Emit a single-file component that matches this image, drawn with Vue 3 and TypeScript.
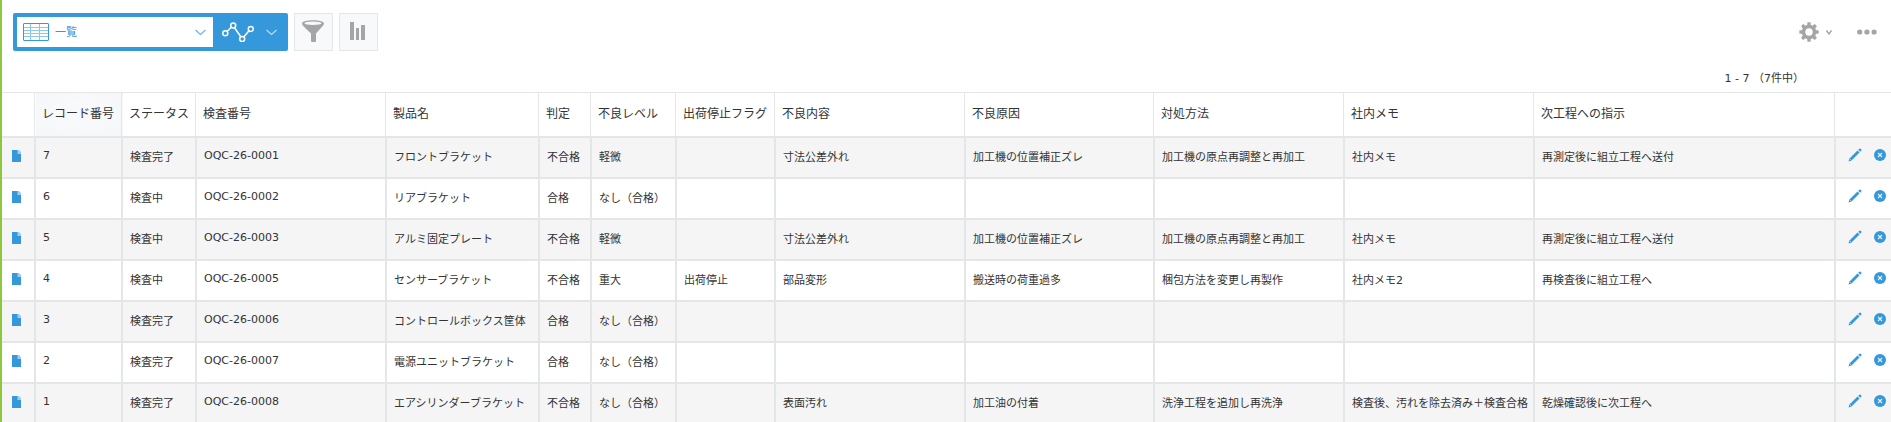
<script setup lang="ts">
import { ref } from 'vue'

interface Column {
  label: string
  cls: string
}

interface Inspection {
  id: number
  cells: string[]
}

const view = ref('一覧')

const columns: Column[] = [
  { label: 'レコード番号', cls: 'w-record' },
  { label: 'ステータス', cls: 'w-status' },
  { label: '検査番号', cls: 'w-text' },
  { label: '製品名', cls: 'w-product' },
  { label: '判定', cls: 'w-result' },
  { label: '不良レベル', cls: 'w-level' },
  { label: '出荷停止フラグ', cls: 'w-flag' },
  { label: '不良内容', cls: 'w-text' },
  { label: '不良原因', cls: 'w-cause' },
  { label: '対処方法', cls: 'w-text' },
  { label: '社内メモ', cls: 'w-text' },
  { label: '次工程への指示', cls: 'w-rest' },
]

const rows: Inspection[] = [
  { id: 7, cells: ['検査完了', 'OQC-26-0001', 'フロントブラケット', '不合格', '軽微', '', '寸法公差外れ', '加工機の位置補正ズレ', '加工機の原点再調整と再加工', '社内メモ', '再測定後に組立工程へ送付'] },
  { id: 6, cells: ['検査中', 'OQC-26-0002', 'リアブラケット', '合格', 'なし（合格）', '', '', '', '', '', ''] },
  { id: 5, cells: ['検査中', 'OQC-26-0003', 'アルミ固定プレート', '不合格', '軽微', '', '寸法公差外れ', '加工機の位置補正ズレ', '加工機の原点再調整と再加工', '社内メモ', '再測定後に組立工程へ送付'] },
  { id: 4, cells: ['検査中', 'OQC-26-0005', 'センサーブラケット', '不合格', '重大', '出荷停止', '部品変形', '搬送時の荷重過多', '梱包方法を変更し再製作', '社内メモ2', '再検査後に組立工程へ'] },
  { id: 3, cells: ['検査完了', 'OQC-26-0006', 'コントロールボックス筐体', '合格', 'なし（合格）', '', '', '', '', '', ''] },
  { id: 2, cells: ['検査完了', 'OQC-26-0007', '電源ユニットブラケット', '合格', 'なし（合格）', '', '', '', '', '', ''] },
  { id: 1, cells: ['検査完了', 'OQC-26-0008', 'エアシリンダーブラケット', '不合格', 'なし（合格）', '', '表面汚れ', '加工油の付着', '洗浄工程を追加し再洗浄', '検査後、汚れを除去済み＋検査合格', '乾燥確認後に次工程へ'] },
]

const teeth = [0, 45, 90, 135, 180, 225, 270, 315]
</script>

<template>
  <main class="app">
    <header class="toolbar">
      <div class="switcher">
        <div class="view">
          <svg class="grid-icon" width="26" height="18" viewBox="0 0 26 18" aria-hidden="true">
            <rect x="0.5" y="0.5" width="25" height="17" rx="1" fill="#fff" stroke="#3498db" />
            <path d="M1 4.5H25M1 7.5H25M1 10.5H25M1 13.5H25M7.5 1V17M16.5 1V17" stroke="#8fc6ec" fill="none" />
            <rect x="0.5" y="0.5" width="25" height="17" rx="1" fill="none" stroke="#3498db" />
          </svg>
          <select v-model="view" class="view-select" aria-label="一覧の選択">
            <option>一覧</option>
          </select>
          <svg class="chevron" width="11" height="7" viewBox="0 0 11 7" aria-hidden="true">
            <path d="M0.5 1L5.5 5.5L10.5 1" stroke="#6db5e6" stroke-width="1.2" fill="none" />
          </svg>
        </div>
        <button class="graph" type="button" aria-label="グラフの選択">
          <svg width="32" height="20" viewBox="0 0 32 20" aria-hidden="true">
            <g fill="none" stroke="#fff" stroke-width="1.5">
              <path d="M5 9.5L9.300 5.300M12.500 5.700L18.800 14.800M21.800 15L27 8.800" />
              <circle cx="3.300" cy="11.200" r="2.500" />
              <circle cx="11.200" cy="3.500" r="2.500" />
              <circle cx="20.200" cy="17" r="2.500" />
              <circle cx="28.800" cy="7" r="2.500" />
            </g>
          </svg>
          <svg width="11" height="7" viewBox="0 0 11 7" aria-hidden="true">
            <path d="M0.500 1L5.500 5.500L10.500 1" stroke="#b9dcf4" stroke-width="1.2" fill="none" />
          </svg>
        </button>
      </div>
      <button class="tool" type="button" aria-label="絞り込む">
        <svg width="22" height="22" viewBox="0 0 22 22" aria-hidden="true">
          <path d="M0 3.500C0 -0.800 22 -0.800 22 3.500C22 5.500 19 7.500 14 13.500V21Q14 22 13 22H10Q9 22 9 21V13.500C3 7.500 0 5.500 0 3.500Z" fill="#a5a5a5" />
          <ellipse cx="11" cy="3.300" rx="8.500" ry="1.700" fill="#f7f9fa" />
        </svg>
      </button>
      <button class="tool" type="button" aria-label="集計する">
        <svg width="15" height="18" viewBox="0 0 15 18" aria-hidden="true">
          <path d="M0 0H4V18H0ZM6 6H9V18H6ZM11 3H15V18H11Z" fill="#a5a5a5" />
        </svg>
      </button>
      <div class="actions">
        <button class="plain settings" type="button" aria-label="設定">
          <svg width="20" height="20" viewBox="0 0 20 20" aria-hidden="true">
            <g fill="#a5a5a5">
              <rect v-for="a in teeth" :key="a" x="8.300" y="0.300" width="3.400" height="4" rx="0.600" :transform="`rotate(${a} 10 10)`" />
            </g>
            <circle cx="10" cy="10" r="5.500" fill="none" stroke="#a5a5a5" stroke-width="3.600" />
          </svg>
          <svg width="6" height="5" viewBox="0 0 6 5" aria-hidden="true">
            <path d="M0.500 0.500L3 4L5.500 0.500" stroke="#a0a0a0" stroke-width="1.300" fill="none" />
          </svg>
        </button>
        <button class="plain" type="button" aria-label="その他">
          <svg width="20" height="6" viewBox="0 0 20 6" aria-hidden="true">
            <g fill="#a5a5a5"><circle cx="2.700" cy="3" r="2.600" /><circle cx="9.900" cy="3" r="2.600" /><circle cx="17.100" cy="3" r="2.600" /></g>
          </svg>
        </button>
      </div>
    </header>

    <div class="pager">1 - 7 （7件中）</div>

    <table class="records">
      <colgroup>
        <col class="w-open" />
        <col v-for="c in columns" :key="c.label" :class="c.cls" />
        <col class="w-ops" />
      </colgroup>
      <thead>
        <tr>
          <th></th>
          <th v-for="(c, i) in columns" :key="c.label" scope="col" :class="{ sorted: i === 0 }">{{ c.label }}</th>
          <th></th>
        </tr>
      </thead>
      <tbody>
        <tr v-for="r in rows" :key="r.id">
          <td class="open">
            <a href="#" aria-label="レコードの詳細を表示する">
              <svg width="9" height="12" viewBox="0 0 9 12" aria-hidden="true">
                <path d="M0 0H6L9 3V12H0Z" fill="#3498db" />
                <path d="M5.500 0H7L9 2V4H5.500Z" fill="#9dcdf0" />
              </svg>
            </a>
          </td>
          <td>{{ r.id }}</td>
          <td v-for="(cell, i) in r.cells" :key="i">{{ cell }}</td>
          <td class="ops">
            <div class="ops-row">
              <button class="plain" type="button" aria-label="編集する">
                <svg width="14" height="14" viewBox="0 0 14 14" aria-hidden="true">
                  <path d="M0.500 13.500L1.500 10.500L9.500 2.500L11.500 4.500L3.500 12.500Z" fill="#3498db" />
                  <path d="M10.200 1.800L11.500 0.700Q12.200 0.200 12.900 0.900L13.200 1.200Q13.900 1.900 13.300 2.600L12.200 3.800Z" fill="#3498db" />
                  <path d="M1.800 10.800L3.200 12.200" stroke="#b5daf3" stroke-width="0.800" />
                </svg>
              </button>
              <button class="plain" type="button" aria-label="削除する">
                <svg width="12" height="12" viewBox="0 0 12 12" aria-hidden="true">
                  <circle cx="6" cy="6" r="6" fill="#3498db" />
                  <path d="M4 4L8 8M8 4L4 8" stroke="#e4f2fb" stroke-width="1.100" />
                </svg>
              </button>
            </div>
          </td>
        </tr>
      </tbody>
    </table>
  </main>
</template>

<style>
body {
  margin: 0;
  background: #fff;
}
</style>

<style scoped>
.app {
  box-sizing: border-box;
  height: 100vh;
  overflow: hidden;
  border-left: 2px solid #8dc63f;
  color: #333;
  font-family: "DejaVu Sans", "Noto Sans CJK JP", sans-serif;
  font-size: 11px;
}
button {
  font: inherit;
  cursor: pointer;
}
svg {
  display: block;
}
.toolbar {
  display: flex;
  align-items: center;
  padding: 13px 14px 0 11px;
}
.switcher {
  box-sizing: border-box;
  display: flex;
  width: 275px;
  height: 38px;
  padding: 4px;
  border-radius: 2px;
  background: #3498db;
}
.view {
  display: grid;
  grid-template-columns: 6px 26px 1fr 11px 7px;
  align-items: center;
  width: 196px;
  background: #fff;
}
.grid-icon {
  grid-area: 1 / 2;
}
.view-select {
  grid-area: 1 / 1 / 2 / 6;
  height: 30px;
  padding: 0 24px 0 38px;
  border: 0;
  background: transparent;
  appearance: none;
  color: #3498db;
  font: inherit;
}
.chevron {
  grid-area: 1 / 4;
  pointer-events: none;
}
.graph {
  display: flex;
  flex: 1;
  align-items: center;
  gap: 12px;
  padding: 0 0 0 9px;
  border: 0;
  background: transparent;
}
.tool {
  box-sizing: border-box;
  display: flex;
  align-items: center;
  justify-content: center;
  width: 39px;
  height: 38px;
  margin-left: 6px;
  padding: 0 2px 2px 0;
  border: 1px solid #e3e7e8;
  background: #f7f9fa;
}
.plain {
  padding: 0;
  border: 0;
  background: transparent;
}
.actions {
  display: flex;
  align-items: center;
  gap: 25px;
  margin-left: auto;
}
.settings {
  display: flex;
  align-items: center;
  gap: 7px;
}
.pager {
  padding: 19px 87px 4px 0;
  line-height: 18px;
  text-align: right;
}
.records {
  width: 100%;
  border-top: 1px solid #e3e7e8;
  border-spacing: 0;
  table-layout: fixed;
}
.w-open { width: 34px; }
.w-record { width: 87px; }
.w-status { width: 74px; }
.w-text { width: 190px; }
.w-product { width: 153px; }
.w-result { width: 52px; }
.w-level { width: 85px; }
.w-flag { width: 99px; }
.w-cause { width: 189px; }
.w-ops { width: 55px; }
th {
  box-sizing: border-box;
  height: 45px;
  padding: 0 0 4px 6px;
  border-bottom: 2px solid #e3e7e8;
  background: linear-gradient(#e3e7e8, #e3e7e8) right 1px top 0 / 1px 100% no-repeat;
  font-size: 12px;
  font-weight: normal;
  text-align: left;
  white-space: nowrap;
}
th.sorted {
  background:
    linear-gradient(#e3e7e8, #e3e7e8) right 1px top 0 / 1px 100% no-repeat,
    radial-gradient(ellipse at center, #f7f9fa 40%, #f4f6f7);
}
td {
  box-sizing: border-box;
  height: 41px;
  padding: 0 0 4px 7px;
  border-right: 2px solid #e3e7e8;
  border-bottom: 2px solid #e3e7e8;
  white-space: nowrap;
}
tbody tr:nth-child(odd) {
  background: #f5f5f5;
}
th:last-child {
  background: none;
}
td:last-child {
  border-right: 0;
}
td.open {
  padding: 0 0 4px 10px;
}
.open a {
  display: inline-block;
  vertical-align: middle;
}
td.ops {
  padding: 0 5px 5px 0;
}
.ops-row {
  display: flex;
  align-items: center;
  justify-content: flex-end;
  gap: 12px;
}
</style>
